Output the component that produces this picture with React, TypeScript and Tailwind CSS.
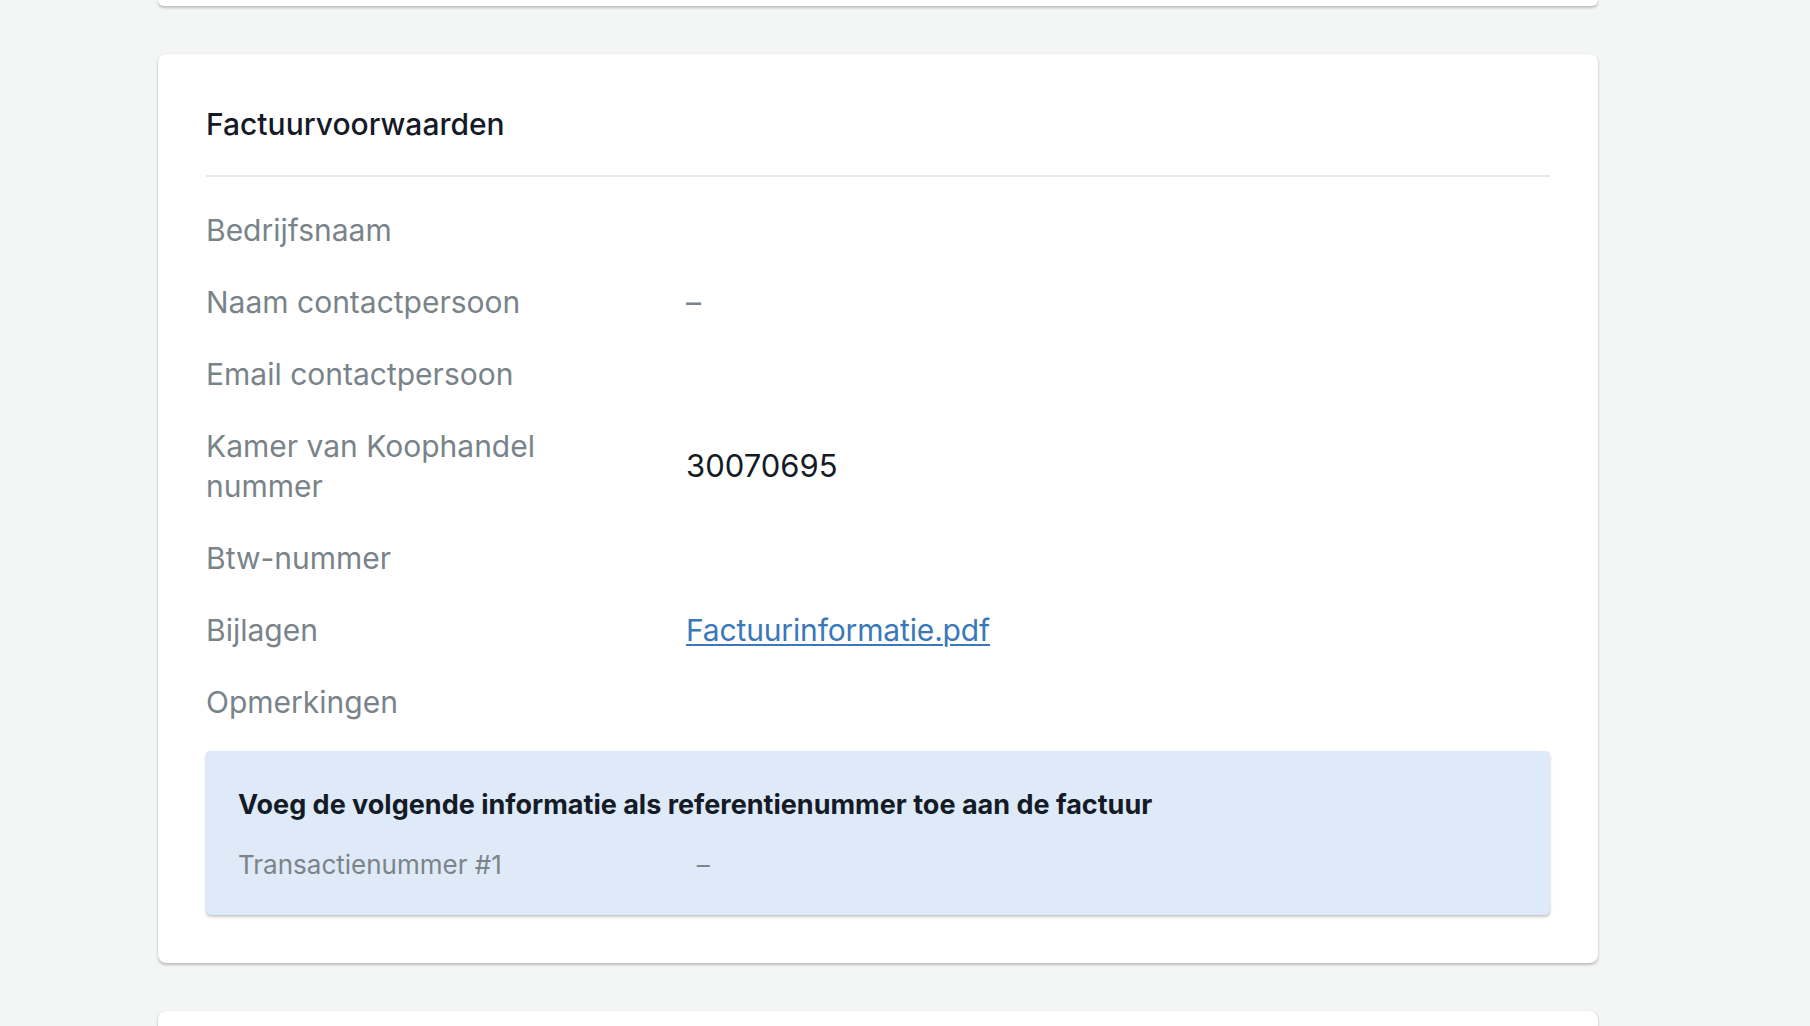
import React from 'react';

type Row = {
  label: string;
  value?: React.ReactNode;
};

const rows: Row[] = [
  { label: 'Bedrijfsnaam' },
  { label: 'Naam contactpersoon', value: <span className="text-[#7a8489]">–</span> },
  { label: 'Email contactpersoon' },
  { label: 'Kamer van Koophandel nummer', value: <span className="text-[31px]">30070695</span> },
  { label: 'Btw-nummer' },
  {
    label: 'Bijlagen',
    value: (
      <a
        href="#"
        className="text-[#3a78b9] underline decoration-2 underline-offset-[3px] tracking-[-0.005em]"
      >
        Factuurinformatie.pdf
      </a>
    ),
  },
  { label: 'Opmerkingen' },
];

const cardShadow =
  'shadow-[0_0_1px_rgba(0,0,0,0.18),0_2px_3px_rgba(0,0,0,0.22)]';

export default function App() {
  return (
    <div className="min-h-screen bg-[#f4f6f5] font-['Inter',sans-serif] overflow-hidden h-[1026px]">
      <div className="ml-[158px] w-[1440px] flex flex-col gap-12">
        {/* bottom of previous card */}
        <div className={`h-[6px] bg-white rounded-b-lg ${cardShadow}`} />

        <section className={`bg-white rounded-lg px-12 pt-[52px] pb-12 ${cardShadow}`}>
          <h2 className="text-[30px] leading-9 font-medium text-[#141b27]">
            Factuurvoorwaarden
          </h2>
          <div className="mt-[33px] h-[2px] bg-[#e6eaea]" />

          <dl className="mt-[17px]">
            {rows.map((row) => (
              <div key={row.label} className="flex items-center py-4">
                <dt className="w-1/3 shrink-0 text-[30px] leading-10 text-[#79838a]">
                  {row.label}
                </dt>
                <dd className="pl-8 text-[30px] leading-10 text-[#151b26]">
                  {row.value}
                </dd>
              </div>
            ))}
          </dl>

          <div className="mt-[13px] rounded-[5px] bg-[#deeaf7] px-8 pt-[38px] pb-[34px] shadow-[0_0_1px_rgba(0,0,0,0.12),0_2px_3px_rgba(0,0,0,0.22)]">
            <h3 className="text-[27px] leading-8 font-bold text-[#141b27]">
              Voeg de volgende informatie als referentienummer toe aan de factuur
            </h3>
            <div className="mt-7 flex items-center">
              <div className="w-1/3 shrink-0 text-[26px] leading-8 text-[#7a8489]">
                Transactienummer #1
              </div>
              <div className="pl-8 text-[26px] leading-8 text-[#7a8489]">–</div>
            </div>
          </div>
        </section>

        {/* top of next card */}
        <div className={`h-[40px] bg-white rounded-t-lg ${cardShadow}`} />
      </div>
    </div>
  );
}
